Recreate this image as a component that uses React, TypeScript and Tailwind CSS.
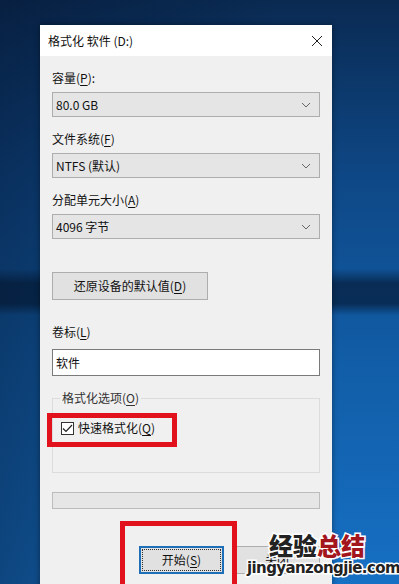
import React from "react";

const cjk = "font-['Microsoft_YaHei','Noto_Sans_CJK_SC',sans-serif]";

function U({ children }: { children: React.ReactNode }) {
  return <span className="underline underline-offset-2">{children}</span>;
}

function Combo({ value }: { value: string }) {
  return (
    <div className="flex h-[25px] items-center justify-between border border-[#adadad] bg-[#e5e5e5] pl-[3px] pr-[8px] text-[12px] text-[#111]">
      <span>{value}</span>
      <svg width="10" height="6" viewBox="0 0 10 6" className="text-[#666]">
        <path d="M1 1 L5 5 L9 1" fill="none" stroke="currentColor" strokeWidth="1" />
      </svg>
    </div>
  );
}

export default function App() {
  return (
    <div
      className={[
        "relative h-[584px] w-[399px] overflow-hidden",
        "bg-[linear-gradient(180deg,transparent_46%,rgba(3,18,40,0.6)_48.5%,rgba(3,18,40,0.6)_52%,transparent_54%),linear-gradient(90deg,rgba(4,20,45,0.45)_0%,transparent_70%),linear-gradient(180deg,#0a2a52_0%,#0e4785_30%,#115ca5_60%,#1670c4_100%)]",
        cjk,
      ].join(" ")}
    >
      {/* ── Dialog ─────────────────────────────────────────── */}
      <div className="ml-[40px] mt-[25px] flex h-[580px] w-[292px] flex-col bg-[#f0f0f0] shadow-[0_0_6px_rgba(0,0,0,0.4)]">
        <div className="flex h-[31px] flex-shrink-0 items-center justify-between bg-white pl-[8px] pr-[9px] text-[12px] text-[#111]">
          <span>格式化 软件 (D:)</span>
          <svg width="12" height="12" viewBox="0 0 12 12">
            <path d="M1 1 L11 11 M11 1 L1 11" stroke="#222" strokeWidth="1" />
          </svg>
        </div>

        <div className="flex flex-col px-[12px] text-[12px] leading-[16px] text-[#111]">
          <div className="mt-[14px]">
            容量(<U>P</U>):
          </div>
          <div className="mt-[6px]">
            <Combo value="80.0 GB" />
          </div>

          <div className="mt-[14px]">
            文件系统(<U>F</U>)
          </div>
          <div className="mt-[6px]">
            <Combo value="NTFS (默认)" />
          </div>

          <div className="mt-[14px]">
            分配单元大小(<U>A</U>)
          </div>
          <div className="mt-[6px]">
            <Combo value="4096 字节" />
          </div>

          <button className="mt-[33px] h-[28px] w-[156px] border border-[#adadad] bg-[#e1e1e1] text-[12px] text-[#111]">
            还原设备的默认值(<U>D</U>)
          </button>

          <div className="mt-[24px]">
            卷标(<U>L</U>)
          </div>
          <div className="mt-[9px] flex h-[27px] items-center border border-[#7a7a7a] bg-white pl-[3px]">
            软件
          </div>

          {/* Group box */}
          <div className="relative mt-[22px] h-[75px] border border-[#dcdcdc]">
            <span className="absolute -top-[9px] left-[7px] bg-[#f0f0f0] px-[2px] text-[#333]">
              格式化选项(<U>O</U>)
            </span>
            <div className="mt-[21px] flex items-center gap-[4px] pl-[8px]">
              <span className="flex h-[13px] w-[13px] items-center justify-center border border-[#333] bg-white">
                <svg width="11" height="9" viewBox="0 0 11 9">
                  <path d="M1 4.5 L4 7.5 L10 1" fill="none" stroke="#222" strokeWidth="1.2" />
                </svg>
              </span>
              <span>
                快速格式化(<U>Q</U>)
              </span>
            </div>
          </div>

          <div className="mt-[19px] h-[17px] border border-[#bcbcbc] bg-[#e6e6e6]" />

          <div className="mt-[37px] flex justify-end gap-[10px]">
            <button className="flex h-[28px] w-[85px] items-center justify-center border-2 border-[#1f6fb8] bg-[#e1e1e1] p-[1px]">
              <span className="flex h-full w-full items-center justify-center border border-dotted border-[#333]">
                开始(<U>S</U>)
              </span>
            </button>
            <button className="h-[28px] w-[86px] border border-[#adadad] bg-[#e1e1e1]">关闭</button>
          </div>
        </div>
      </div>

      {/* ── Red annotation boxes ──────────────────────────── */}
      <div className="absolute left-[47px] top-[413px] h-[34px] w-[130px] border-[5px] border-[#e1121b]" />
      <div className="absolute left-[120px] top-[521px] h-[80px] w-[117px] border-[5px] border-[#e1121b]" />

      {/* ── Watermark ─────────────────────────────────────── */}
      <div className="absolute left-[269px] top-[531px] font-['Noto_Sans_CJK_SC',sans-serif] text-[24px] font-black leading-[28px] [-webkit-text-stroke:3px_white] [paint-order:stroke_fill]">
        <span className="text-[#222]">经验</span>
        <span className="text-[#a3161d]">总结</span>
      </div>
      <div className="absolute left-[247px] top-[559px] font-['DejaVu_Sans',sans-serif] text-[15px] font-bold leading-[18px] tracking-[-0.6px] text-[#222] [-webkit-text-stroke:3px_white] [paint-order:stroke_fill]">
        jingyanzongjie.com
      </div>
    </div>
  );
}
